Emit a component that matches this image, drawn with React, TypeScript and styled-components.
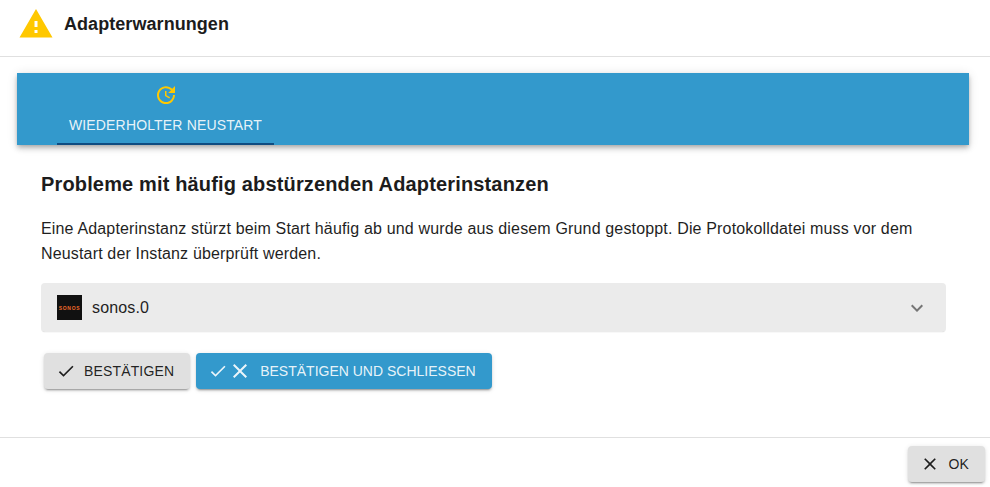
import React from "react";
import styled, { createGlobalStyle } from "styled-components";

const Global = createGlobalStyle`
  html, body { margin: 0; padding: 0; background: #fff; }
  body { font-family: "Liberation Sans", Arial, sans-serif; color: rgba(0, 0, 0, 0.87); }
  * { box-sizing: border-box; }
`;

const Dialog = styled.div`
  width: 990px;
  height: 487px;
  display: flex;
  flex-direction: column;
  overflow: hidden;
`;

const Header = styled.header`
  height: 57px;
  flex: none;
  display: flex;
  align-items: center;
  gap: 10px;
  padding: 0 0 9px 18px;
  border-bottom: 1px solid #e0e0e0;
`;

const Title = styled.h2`
  margin: 0;
  font-size: 18px;
  font-weight: 700;
  line-height: 24px;
  letter-spacing: 0.06px;
  color: #1c1c1c;
`;

const Content = styled.main`
  flex: 1;
  padding: 16px 21px 0 17px;
`;

const TabBar = styled.div`
  height: 72px;
  display: flex;
  padding-left: 40px;
  background: #3399cc;
  box-shadow: 0 2px 4px -1px rgba(0, 0, 0, 0.2), 0 4px 5px rgba(0, 0, 0, 0.14), 0 1px 10px rgba(0, 0, 0, 0.12);
`;

const Tab = styled.div`
  width: 217px;
  display: flex;
  flex-direction: column;
  align-items: center;
  padding-top: 10px;
  gap: 8px;
  border-bottom: 2px solid #0f4c81;
  color: rgba(255, 255, 255, 0.9);
  font-size: 14px;
  line-height: 20px;
  letter-spacing: 0.16px;
  text-transform: uppercase;
`;

const Panel = styled.section`
  padding: 26px 0 0 24px;
`;

const Heading = styled.h3`
  margin: 0;
  font-size: 20px;
  font-weight: 700;
  line-height: 26px;
  letter-spacing: 0.15px;
  color: #1c1c1c;
`;

const Body = styled.p`
  margin: 19px 0 0;
  width: 890px;
  font-size: 16px;
  line-height: 25px;
  letter-spacing: 0.16px;
  color: #1f1f1f;
`;

const Accordion = styled.div`
  margin-top: 17px;
  width: 905px;
  height: 49px;
  display: flex;
  align-items: center;
  padding: 0 17px 0 16px;
  gap: 10px;
  background: #ebebeb;
  border-radius: 4px;
  box-shadow: 0 1px 1px -1px rgba(0, 0, 0, 0.3);
  font-size: 16px;
  letter-spacing: 0.16px;
  color: #1f1f1f;
`;

const Logo = styled.div`
  width: 25px;
  height: 25px;
  flex: none;
  display: flex;
  align-items: center;
  justify-content: center;
  overflow: hidden;
  background: #111;
  color: #ef6a2a;
  font-size: 5px;
  font-weight: 700;
  letter-spacing: 0.7px;
`;

const InstanceName = styled.span`
  flex: 1;
`;

const Actions = styled.div`
  margin-top: 21px;
  padding-left: 3px;
  display: flex;
  gap: 6px;
`;

const Button = styled.button<{ $primary?: boolean }>`
  height: 36px;
  display: inline-flex;
  align-items: center;
  padding: 0 16px 0 12px;
  border: 0;
  border-radius: 4px;
  background: ${(p) => (p.$primary ? "#3399cc" : "#e0e0e0")};
  color: ${(p) => (p.$primary ? "rgba(255,255,255,0.9)" : "rgba(0,0,0,0.87)")};
  font-family: inherit;
  font-size: 14px;
  font-weight: 400;
  letter-spacing: ${(p) => (p.$primary ? 0 : 0.15)}px;
  text-transform: uppercase;
  box-shadow: 0 3px 1px -2px rgba(0, 0, 0, 0.2), 0 2px 2px rgba(0, 0, 0, 0.14), 0 1px 5px rgba(0, 0, 0, 0.12);
`;

const ButtonIcons = styled.span`
  display: inline-flex;
  align-items: center;
  margin-right: 8px;
`;

const Footer = styled.footer`
  height: 50px;
  flex: none;
  display: flex;
  justify-content: flex-end;
  align-items: flex-start;
  padding: 8px 5px 0 0;
  border-top: 1px solid #e0e0e0;
`;

const Icon = ({ d, size = 24, color = "currentColor" }: { d: string; size?: number; color?: string }) => (
  <svg width={size} height={size} viewBox="0 0 24 24" fill={color}>
    <path d={d} />
  </svg>
);

const WARNING = "M1 21h22L12 2 1 21zm12-3h-2v-2h2v2zm0-4h-2v-4h2v4z";
const UPDATE =
  "M21 10.12h-6.78l2.74-2.82c-2.73-2.7-7.15-2.8-9.88-.1-2.73 2.71-2.73 7.08 0 9.79s7.15 2.71 9.88 0C18.32 15.65 19 14.08 19 12.1h2c0 1.98-.88 4.55-2.64 6.29-3.51 3.48-9.21 3.48-12.72 0-3.5-3.47-3.53-9.11-.02-12.58s9.14-3.47 12.65 0L21 3v7.12zM12.5 8v4.25l3.5 2.08-.72 1.21L11 13V8h1.5z";
const CHECK = "M9 16.17 4.83 12l-1.42 1.41L9 19 21 7l-1.41-1.41z";
const CLOSE =
  "M19 6.41 17.59 5 12 10.59 6.41 5 5 6.41 10.59 12 5 17.59 6.41 19 12 13.41 17.59 19 19 17.59 13.41 12z";
const EXPAND = "M16.59 8.59 12 13.17 7.41 8.59 6 10l6 6 6-6z";

const App: React.FunctionComponent = () => {
  return (
    <Dialog>
      <Global />
      <Header>
        <Icon d={WARNING} size={36} color="#ffc800" />
        <Title>Adapterwarnungen</Title>
      </Header>
      <Content>
        <TabBar>
          <Tab>
            <Icon d={UPDATE} color="#ffc800" />
            Wiederholter Neustart
          </Tab>
        </TabBar>
        <Panel>
          <Heading>Probleme mit häufig abstürzenden Adapterinstanzen</Heading>
          <Body>
            Eine Adapterinstanz stürzt beim Start häufig ab und wurde aus diesem Grund gestoppt. Die Protokolldatei
            muss vor dem Neustart der Instanz überprüft werden.
          </Body>
          <Accordion>
            <Logo>SONOS</Logo>
            <InstanceName>sonos.0</InstanceName>
            <Icon d={EXPAND} color="#757575" />
          </Accordion>
          <Actions>
            <Button>
              <ButtonIcons>
                <Icon d={CHECK} size={20} />
              </ButtonIcons>
              Bestätigen
            </Button>
            <Button $primary>
              <ButtonIcons>
                <Icon d={CHECK} size={20} />
                <Icon d={CLOSE} size={24} />
              </ButtonIcons>
              Bestätigen und schliessen
            </Button>
          </Actions>
        </Panel>
      </Content>
      <Footer>
        <Button>
          <ButtonIcons>
            <Icon d={CLOSE} size={20} />
          </ButtonIcons>
          OK
        </Button>
      </Footer>
    </Dialog>
  );
};

export default App;
